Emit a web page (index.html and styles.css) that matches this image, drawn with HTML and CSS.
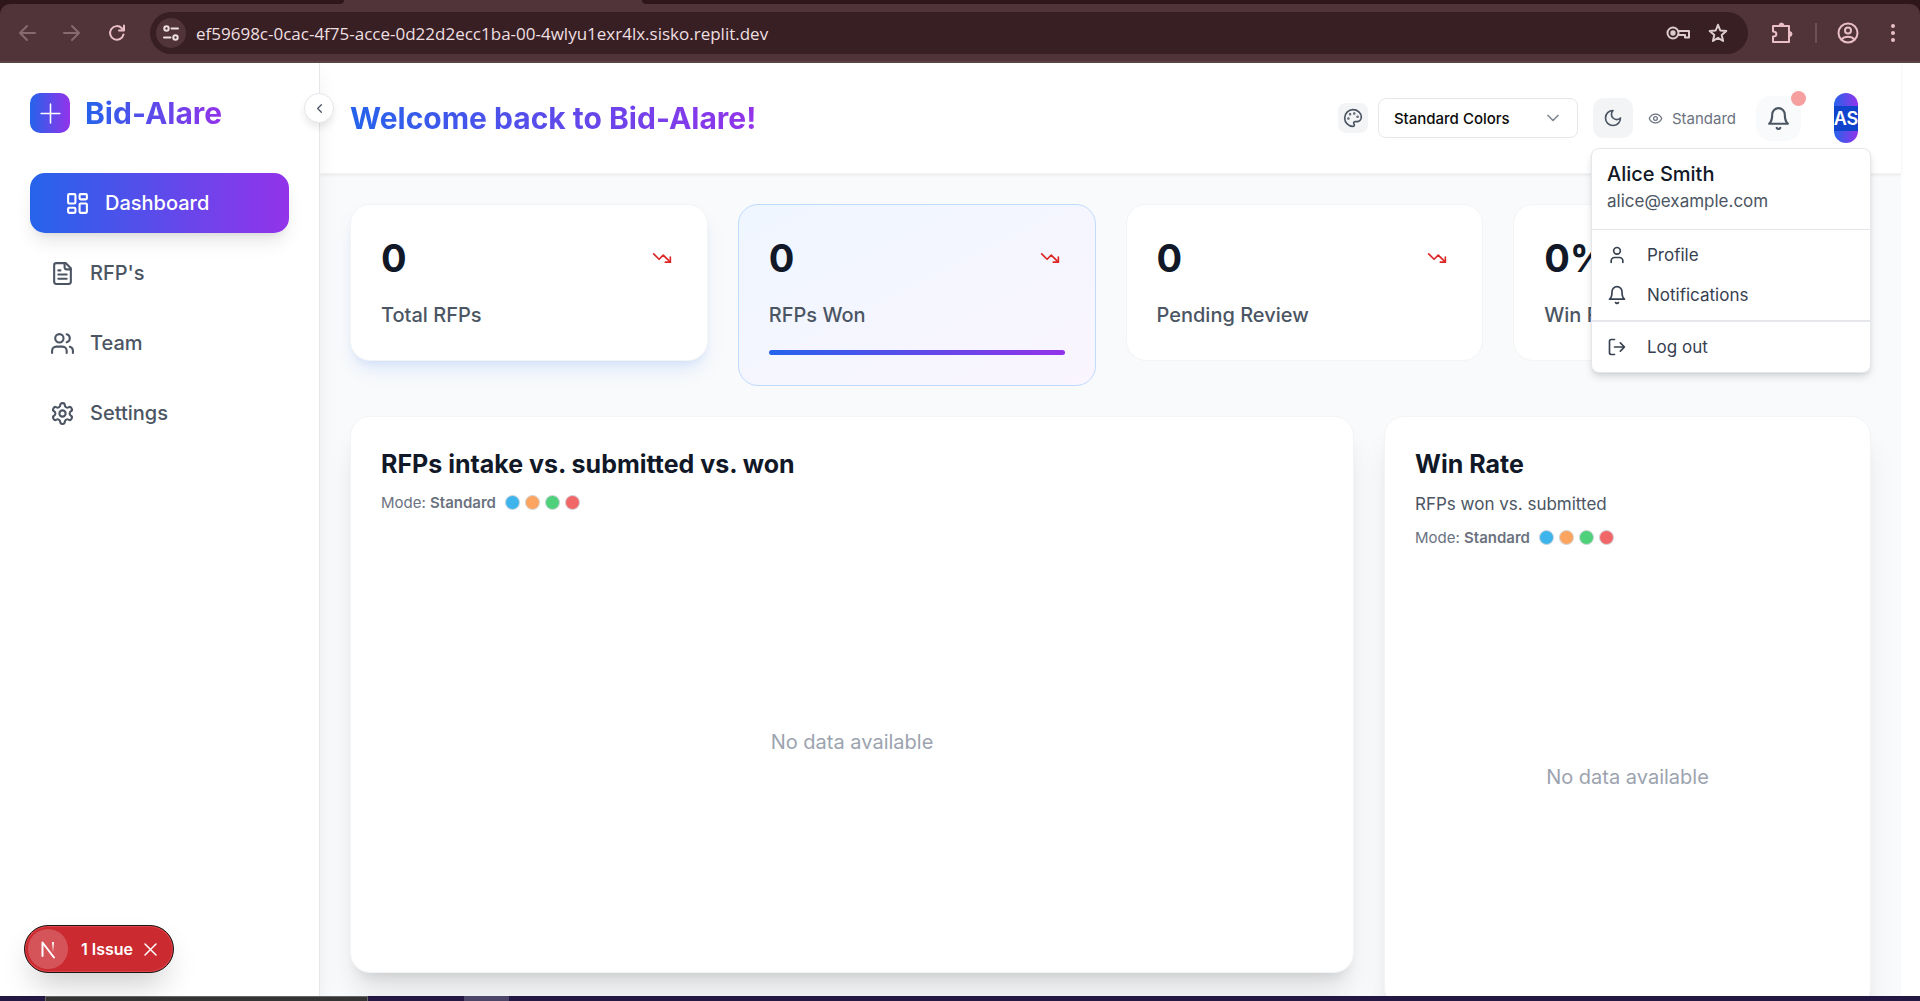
FILE: index.html
```html
<!DOCTYPE html>
<html lang="en">
<head>
<meta charset="utf-8">
<meta name="viewport" content="width=device-width, initial-scale=1">
<title>Bid-Alare Dashboard</title>
<link rel="stylesheet" href="styles.css">
</head>
<body>
<svg class="sprite" aria-hidden="true">
  <symbol id="trend-down" viewBox="0 0 24 24"><path d="M22 17l-8.500-8.500-5 5L2 7"/><path d="M16 17h6v-6"/></symbol>
  <symbol id="bell" viewBox="0 0 24 24"><path d="M6 8a6 6 0 0 1 12 0c0 7 3 9 3 9H3s3-2 3-9"/><path d="M10.300 21a1.940 1.940 0 0 0 3.400 0"/></symbol>
</svg>

<div class="browser">
  <div class="tabstrip"><span class="tabs-left"></span><span class="tab-active"></span><span class="tabs-right"></span></div>
  <div class="toolbar">
    <div class="nav-buttons">
      <button class="tool dim" aria-label="Back"><svg class="icon s20" viewBox="0 0 20 20"><path d="M18 10H3M10 3l-7 7 7 7"/></svg></button>
      <button class="tool dim" aria-label="Forward"><svg class="icon s20" viewBox="0 0 20 20"><path d="M2 10h15M10 3l7 7-7 7"/></svg></button>
      <button class="tool" aria-label="Reload"><svg class="icon s20" viewBox="0 0 20 20"><path d="M16.500 11.500A6.800 6.800 0 1 1 14.800 5.200L17 7.400M17 2.500v5h-5"/></svg></button>
    </div>
    <div class="omnibox">
      <button class="site-info" aria-label="Site information"><svg class="icon s20" viewBox="0 0 20 20"><circle cx="5.500" cy="5.500" r="2.200"/><path d="M10.500 5.500H17M3 14.500h6.500"/><circle cx="14.500" cy="14.500" r="2.200"/></svg></button>
      <input class="url" aria-label="Address" value="ef59698c-0cac-4f75-acce-0d22d2ecc1ba-00-4wlyu1exr4lx.sisko.replit.dev">
      <button class="tool pale" aria-label="Passwords"><svg class="icon s24" viewBox="0 0 24 24"><circle cx="7" cy="12" r="5.500"/><circle cx="7" cy="12" r="1.700" fill="currentColor"/><path d="M12 10h11v6.500h-4V14h-7"/></svg></button>
      <button class="tool pale" aria-label="Bookmark"><svg class="icon s20" viewBox="0 0 20 20"><path d="M10 1.800l2.300 5.700 6 .5-4.600 4 1.400 6L10 14.800 4.900 18l1.400-6-4.600-4 6-.5z"/></svg></button>
    </div>
    <div class="tool-buttons">
      <button class="tool" aria-label="Extensions"><svg class="icon s24" viewBox="0 0 24 24"><path d="M3 5h16v16H3v-5.500c4.500 0 4.500-5 0-5z"/><path d="M9 4.500a2.500 2.500 0 0 1 5 0zM19.500 10.500a2.500 2.500 0 0 1 0 5z" fill="currentColor" stroke-width="1"/></svg></button>
      <span class="tool-divider"></span>
      <button class="tool" aria-label="Account"><svg class="icon s24" viewBox="0 0 24 24"><circle cx="12" cy="12" r="9.500"/><circle cx="12" cy="9.500" r="3"/><path d="M5.500 18.500c3-3.600 10-3.600 13 0"/></svg></button>
      <button class="tool" aria-label="Menu"><svg class="icon s24" viewBox="0 0 24 24"><g fill="currentColor" stroke="none"><circle cx="12" cy="5" r="2"/><circle cx="12" cy="12" r="2"/><circle cx="12" cy="19" r="2"/></g></svg></button>
    </div>
  </div>
</div>

<div class="app">
  <aside class="sidebar">
    <div class="brand">
      <span class="brand-mark"><svg class="icon s25" viewBox="0 0 24 24"><path d="M12 3v18M3 12h18"/></svg></span>
      <span class="brand-name gradient-text">Bid-Alare</span>
    </div>
    <nav class="menu">
      <a class="menu-item active" href="#dashboard"><svg class="icon s25" viewBox="0 0 24 24"><rect x="3" y="3" width="7" height="9" rx="1"/><rect x="14" y="3" width="7" height="5" rx="1"/><rect x="14" y="12" width="7" height="9" rx="1"/><rect x="3" y="16" width="7" height="5" rx="1"/></svg>Dashboard</a>
      <a class="menu-item" href="#rfps"><svg class="icon s25" viewBox="0 0 24 24"><path d="M15 2H6a2 2 0 0 0-2 2v16a2 2 0 0 0 2 2h12a2 2 0 0 0 2-2V7z"/><path d="M14 2v4a2 2 0 0 0 2 2h4M10 9H8M16 13H8M16 17H8"/></svg>RFP's</a>
      <a class="menu-item" href="#team"><svg class="icon s25" viewBox="0 0 24 24"><path d="M16 21v-2a4 4 0 0 0-4-4H6a4 4 0 0 0-4 4v2"/><circle cx="9" cy="7" r="4"/><path d="M22 21v-2a4 4 0 0 0-3-3.870M16 3.130a4 4 0 0 1 0 7.750"/></svg>Team</a>
      <a class="menu-item" href="#settings"><svg class="icon s25" viewBox="0 0 24 24"><path d="M12.220 2h-.44a2 2 0 0 0-2 2v.18a2 2 0 0 1-1 1.730l-.43.25a2 2 0 0 1-2 0l-.15-.08a2 2 0 0 0-2.730.73l-.22.38a2 2 0 0 0 .73 2.730l.15.1a2 2 0 0 1 1 1.720v.51a2 2 0 0 1-1 1.740l-.15.09a2 2 0 0 0-.73 2.730l.22.38a2 2 0 0 0 2.730.73l.15-.08a2 2 0 0 1 2 0l.43.25a2 2 0 0 1 1 1.730V20a2 2 0 0 0 2 2h.44a2 2 0 0 0 2-2v-.18a2 2 0 0 1 1-1.730l.43-.25a2 2 0 0 1 2 0l.15.08a2 2 0 0 0 2.730-.73l.22-.39a2 2 0 0 0-.73-2.730l-.15-.08a2 2 0 0 1-1-1.740v-.5a2 2 0 0 1 1-1.740l.15-.09a2 2 0 0 0 .73-2.730l-.22-.38a2 2 0 0 0-2.730-.73l-.15.08a2 2 0 0 1-2 0l-.43-.25a2 2 0 0 1-1-1.730V4a2 2 0 0 0-2-2z"/><circle cx="12" cy="12" r="3"/></svg>Settings</a>
    </nav>
    <button class="collapse" aria-label="Collapse sidebar"><svg class="icon s15" viewBox="0 0 24 24"><path d="M15 18l-6-6 6-6"/></svg></button>
  </aside>

  <main class="main">
    <header class="header">
      <h1 class="gradient-text">Welcome back to Bid-Alare!</h1>
      <div class="actions">
        <div class="color-mode">
          <button class="palette" aria-label="Palette"><svg class="icon s20" viewBox="0 0 24 24"><g fill="currentColor"><circle cx="13.500" cy="6.500" r=".5"/><circle cx="17.500" cy="10.500" r=".5"/><circle cx="8.500" cy="7.500" r=".5"/><circle cx="6.500" cy="12.500" r=".5"/></g><path d="M12 2C6.500 2 2 6.500 2 12s4.500 10 10 10c.926 0 1.648-.746 1.648-1.688 0-.437-.18-.835-.437-1.125-.29-.289-.438-.652-.438-1.125a1.640 1.640 0 0 1 1.668-1.668h1.996c3.051 0 5.555-2.503 5.555-5.554C21.965 6.012 17.461 2 12 2z"/></svg></button>
          <div class="select-wrap">
            <select class="select" aria-label="Color mode"><option>Standard Colors</option></select>
            <svg class="icon s20 select-arrow" viewBox="0 0 24 24"><path d="M6 9l6 6 6-6"/></svg>
          </div>
        </div>
        <button class="theme" aria-label="Dark mode"><svg class="icon s20" viewBox="0 0 24 24"><path d="M12 3a6 6 0 0 0 9 9 9 9 0 1 1-9-9z"/></svg></button>
        <span class="vision"><svg class="icon s15" viewBox="0 0 24 24"><path d="M2 12s3-7 10-7 10 7 10 7-3 7-10 7-10-7-10-7z"/><circle cx="12" cy="12" r="3"/></svg>Standard</span>
        <button class="bell" aria-label="Notifications"><svg class="icon s25"><use href="#bell"/></svg><span class="bell-dot"></span></button>
        <div class="account">
          <button class="avatar" aria-label="Account menu"><span class="avatar-pill"><span class="initials">AS</span></span></button>
          <div class="dropdown">
            <div class="who"><div class="who-name">Alice Smith</div><div class="who-mail">alice@example.com</div></div>
            <div class="group">
              <a class="drop-item" href="#profile"><svg class="icon s20" viewBox="0 0 24 24"><path d="M19 21v-2a4 4 0 0 0-4-4H9a4 4 0 0 0-4 4v2"/><circle cx="12" cy="7" r="4"/></svg>Profile</a>
              <a class="drop-item" href="#notifications"><svg class="icon s20"><use href="#bell"/></svg>Notifications</a>
            </div>
            <div class="group last">
              <button class="drop-item"><svg class="icon s20" viewBox="0 0 24 24"><path d="M9 3H5a2 2 0 0 0-2 2v14a2 2 0 0 0 2 2h4M16 17l5-5-5-5M21 12H9"/></svg>Log out</button>
            </div>
          </div>
        </div>
      </div>
    </header>

    <div class="content">
      <section class="stats">
        <article class="stat glow">
          <div class="stat-top"><span class="stat-value">0</span><svg class="icon s20 trend"><use href="#trend-down"/></svg></div>
          <div class="stat-label">Total RFPs</div>
        </article>
        <article class="stat tinted">
          <div class="stat-top"><span class="stat-value">0</span><svg class="icon s20 trend"><use href="#trend-down"/></svg></div>
          <div class="stat-label">RFPs Won</div>
          <div class="bar"></div>
        </article>
        <article class="stat">
          <div class="stat-top"><span class="stat-value">0</span><svg class="icon s20 trend"><use href="#trend-down"/></svg></div>
          <div class="stat-label">Pending Review</div>
        </article>
        <article class="stat">
          <div class="stat-top"><span class="stat-value">0%</span><svg class="icon s20 trend"><use href="#trend-down"/></svg></div>
          <div class="stat-label">Win Rate</div>
        </article>
      </section>

      <section class="charts">
        <article class="chart wide">
          <h2>RFPs intake vs. submitted vs. won</h2>
          <div class="mode"><span>Mode: <b>Standard</b></span><span class="dots"><i class="dot blue"></i><i class="dot orange"></i><i class="dot green"></i><i class="dot red"></i></span></div>
          <div class="empty">No data available</div>
        </article>
        <article class="chart">
          <h2>Win Rate</h2>
          <p class="sub">RFPs won vs. submitted</p>
          <div class="mode"><span>Mode: <b>Standard</b></span><span class="dots"><i class="dot blue"></i><i class="dot orange"></i><i class="dot green"></i><i class="dot red"></i></span></div>
          <div class="empty">No data available</div>
        </article>
      </section>
    </div>
  </main>

  <div class="issue">
    <button class="issue-mark" aria-label="Open developer tools"><svg class="icon s20" viewBox="0 0 20 20"><defs><linearGradient id="fade" x1="0" y1="0" x2="0" y2="1"><stop offset="0" stop-color="#fff"/><stop offset="1" stop-color="#fff" stop-opacity="0"/></linearGradient></defs><path d="M4.500 17V3.500L16 18.500"/><rect x="14" y="3" width="2" height="10" fill="url(#fade)" stroke="none"/></svg></button>
    <button class="issue-text">1 Issue</button>
    <button class="issue-close" aria-label="Dismiss"><svg class="icon s15" viewBox="0 0 15 15"><path d="M2 2l11 11M13 2L2 13"/></svg></button>
  </div>
</div>

<div class="taskbar"><span class="task-window"></span><span class="task-button"></span></div>
</body>
</html>
```

FILE: styles.css
```css
* { box-sizing: border-box; }

body {
  margin: 0;
  height: 100vh;
  display: flex;
  flex-direction: column;
  overflow: hidden;
  background: #fff;
  color: #111827;
  font-family: Inter, "Liberation Sans", sans-serif;
}

button, select, input { font: inherit; color: inherit; }

button {
  border: 0;
  padding: 0;
  background: none;
  display: flex;
  align-items: center;
  justify-content: center;
}

a { color: inherit; text-decoration: none; }
h1, h2, p { margin: 0; }

.sprite { display: none; }

.icon {
  flex: none;
  fill: none;
  stroke: currentColor;
  stroke-width: 2;
  stroke-linecap: round;
  stroke-linejoin: round;
}
.s15 { width: 15px; height: 15px; }
.s20 { width: 20px; height: 20px; }
.s24 { width: 24px; height: 24px; }
.s25 { width: 25px; height: 25px; }

.gradient-text {
  background: linear-gradient(90deg, #2563eb, #9333ea);
  -webkit-background-clip: text;
  background-clip: text;
  color: transparent;
}

/* Browser chrome */
.browser { flex: none; background: #2f161b; }
.tabstrip { display: flex; height: 4px; background: #50343a; }
.tabs-left { flex: 0 0 344px; background: #2f161b; border-bottom-right-radius: 10px; }
.tab-active { flex: 0 0 298px; }
.tabs-right { flex: 1; background: #2f161b; border-bottom-left-radius: 10px; }
.toolbar {
  display: flex;
  align-items: center;
  height: 59px;
  padding: 1px 15px 0 17px;
  border-bottom: 2px solid #5a4346;
  border-radius: 10px 10px 0 0;
  background: #50343a;
  color: #e9bec6;
}
.nav-buttons { display: flex; gap: 25px; margin-right: 23px; }
.tool { color: #e9bec6; }
.tool.dim { color: #876a70; }
.tool.pale { color: #dccccf; }
.omnibox {
  flex: 1;
  display: flex;
  align-items: center;
  gap: 18px;
  height: 42px;
  padding: 0 20px 0 6px;
  border-radius: 21px;
  background: #381f23;
}
.site-info {
  width: 30px;
  height: 30px;
  border-radius: 15px;
  background: #50343a;
  color: #eedfe1;
}
.url {
  flex: 1;
  border: 0;
  padding: 0;
  margin-left: -8px;
  background: none;
  color: #eedfe1;
  font-family: "Open Sans", "Noto Sans", sans-serif;
  font-size: 17px;
}
.tool-buttons { display: flex; align-items: center; gap: 21px; margin-left: 22px; }
.tool-divider { width: 2px; height: 20px; background: #6d5055; margin-right: -2px; }

/* Shell */
.app { position: relative; flex: 1; min-height: 0; display: flex; overflow: hidden; }

.sidebar {
  position: relative;
  z-index: 3;
  flex: 0 0 320px;
  padding: 30px;
  border-right: 1px solid #e5e7eb;
  background: #fff;
  box-shadow: 0 12px 19px rgba(0, 0, 0, .06);
}
.brand { display: flex; align-items: center; gap: 15px; height: 40px; margin-bottom: 40px; }
.brand-mark {
  display: flex;
  align-items: center;
  justify-content: center;
  width: 40px;
  height: 40px;
  border-radius: 10px;
  background: linear-gradient(90deg, #2563eb, #9333ea);
  color: #fff;
}
.brand-mark .icon { stroke-width: 1.5; }
.brand-name { font-size: 30px; line-height: 40px; font-weight: 700; }
.menu { display: flex; flex-direction: column; gap: 10px; }
.menu-item {
  display: flex;
  align-items: center;
  gap: 15px;
  height: 60px;
  padding: 0 20px;
  border-radius: 15px;
  color: #4b5563;
  font-size: 20px;
  font-weight: 500;
}
.menu-item.active {
  padding-left: 35px;
  background: linear-gradient(90deg, #2563eb, #9333ea);
  color: #fff;
  box-shadow: 0 12px 19px -4px rgba(0, 0, 0, .1), 0 5px 8px -5px rgba(0, 0, 0, .1);
}
.collapse {
  position: absolute;
  top: 30px;
  right: -15px;
  width: 30px;
  height: 30px;
  border: 1px solid #e5e7eb;
  border-radius: 50%;
  background: #fff;
  color: #4b5563;
  box-shadow: 0 5px 8px -1px rgba(0, 0, 0, .1);
}

.main {
  flex: 1;
  min-width: 0;
  margin-right: 19px;
  background: #f9fafb;
}
.header {
  position: relative;
  z-index: 2;
  display: flex;
  align-items: center;
  justify-content: space-between;
  padding: 30px;
  border-bottom: 1px solid #f3f4f6;
  background: #fff;
  box-shadow: 0 1px 3px rgba(0, 0, 0, .08);
}
.header h1 { font-size: 30px; line-height: 40px; font-weight: 700; }
.actions { display: flex; align-items: center; gap: 15px; color: #4b5563; }
.color-mode { display: flex; align-items: center; gap: 10px; }
.palette { width: 30px; height: 30px; border-radius: 8px; background: #f3f4f6; }
.select-wrap { position: relative; }
.select {
  appearance: none;
  width: 200px;
  height: 40px;
  padding: 0 15px;
  border: 1px solid #e5e7eb;
  border-radius: 8px;
  background: #fff;
  color: #0a0a0a;
  font-size: 15px;
  font-weight: 500;
}
.select-arrow { position: absolute; right: 15px; top: 10px; opacity: .7; pointer-events: none; }
.theme { width: 40px; height: 40px; border-radius: 10px; background: #f3f4f6; }
.vision { display: flex; align-items: center; gap: 9px; margin-right: 5px; color: #6b7280; font-size: 15px; }
.bell {
  position: relative;
  width: 45px;
  height: 45px;
  margin-right: 5px;
  border-radius: 15px;
  background: #f9fafb;
}
.bell-dot {
  position: absolute;
  top: -5px;
  right: -5px;
  width: 15px;
  height: 15px;
  border-radius: 50%;
  background: #f69f9f;
}
.account { position: relative; }
.avatar { width: 50px; height: 50px; }
.avatar-pill {
  display: flex;
  align-items: center;
  height: 50px;
  border-radius: 12px;
  background: linear-gradient(90deg, #2563eb, #9333ea);
}
.initials { background: #1144cc; color: #fff; font-size: 18px; line-height: 25px; font-weight: 600; }

.dropdown {
  position: absolute;
  top: 55px;
  right: 0;
  width: 280px;
  border: 1px solid #e5e7eb;
  border-radius: 8px;
  background: #fff;
  box-shadow: 0 5px 8px -1px rgba(0, 0, 0, .12), 0 2px 5px -2px rgba(0, 0, 0, .12);
}
.who { padding: 10px 15px 15px; border-bottom: 1px solid #e5e7eb; }
.who-name { color: #111827; font-size: 20px; line-height: 30px; font-weight: 500; }
.who-mail { color: #4b5563; font-size: 17px; line-height: 25px; }
.group { padding: 5px 0; border-bottom: 2px solid #e5e7eb; }
.group.last { border: 0; }
.drop-item {
  display: flex;
  align-items: center;
  justify-content: flex-start;
  gap: 20px;
  width: 100%;
  height: 40px;
  padding: 0 15px;
  color: #374151;
  font-size: 17px;
}

.content { display: flex; flex-direction: column; gap: 30px; padding: 30px; }
.stats { display: grid; grid-template-columns: repeat(4, 1fr); gap: 30px; align-items: start; }
.stat {
  padding: 30px;
  border: 1px solid #f3f4f6;
  border-radius: 20px;
  background: #fff;
}
.stat.glow { box-shadow: 0 12px 19px -4px rgba(59, 130, 246, .15), 0 5px 8px -5px rgba(59, 130, 246, .15); }
.stat.tinted { border-color: #bfdbfe; background: linear-gradient(to bottom right, #eff6ff, #faf5ff); }
.stat-top { display: flex; align-items: center; justify-content: space-between; height: 45px; margin-bottom: 20px; }
.stat-value { font-size: 38px; font-weight: 700; }
.trend { margin-right: 5px; color: #dc2626; }
.stat-label { color: #4b5563; font-size: 20px; line-height: 30px; font-weight: 500; }
.bar { height: 5px; margin-top: 20px; border-radius: 3px; background: linear-gradient(90deg, #2563eb, #9333ea); }

.charts { display: grid; grid-template-columns: repeat(3, 1fr); gap: 30px; align-items: start; }
.chart {
  padding: 30px;
  border: 1px solid #f3f4f6;
  border-radius: 20px;
  background: #fff;
  box-shadow: 0 25px 31px -6px rgba(0, 0, 0, .1), 0 10px 12px -7px rgba(0, 0, 0, .1);
}
.chart.wide { grid-column: span 2; }
.chart h2 { margin-bottom: 10px; font-size: 25px; line-height: 35px; font-weight: 700; }
.sub { margin-bottom: 10px; color: #4b5563; font-size: 17px; line-height: 25px; }
.mode { display: flex; align-items: center; gap: 9px; height: 20px; color: #6b7280; font-size: 15px; }
.mode b { font-weight: 600; }
.dots { display: flex; gap: 5px; }
.dot { width: 15px; height: 15px; border: 1px solid #d1d5db; border-radius: 50%; }
.blue { background: #3eb4ec; }
.orange { background: #fda560; }
.green { background: #4fd07b; }
.red { background: #f16767; }
.empty {
  display: flex;
  align-items: center;
  justify-content: center;
  height: 400px;
  margin-top: 30px;
  color: #9ca3af;
  font-size: 20px;
}

/* Development issue badge */
.issue {
  position: absolute;
  z-index: 5;
  left: 24px;
  bottom: 23px;
  display: flex;
  align-items: center;
  height: 48px;
  padding-left: 3px;
  border: 1px solid #161616;
  border-radius: 24px;
  background: #ca2a30;
  color: #fff;
  box-shadow: inset 0 0 0 1px #e0454b, 0 16px 32px -8px rgba(0, 0, 0, .24);
}
.issue-mark { width: 40px; height: 40px; border-radius: 50%; background: #d5545a; }
.issue-close .icon { stroke-width: 1.5; }
.issue-text { padding: 0 10px 0 13px; font-size: 16px; font-weight: 600; }
.issue-close { padding-right: 15px; }

.taskbar { flex: none; display: flex; height: 5px; padding-left: 45px; background: #231744; }
.task-window { width: 323px; margin-right: 96px; border: 1px solid #666; border-bottom: 0; background: #333; }
.task-button { width: 45px; background: #4b4567; }
```
